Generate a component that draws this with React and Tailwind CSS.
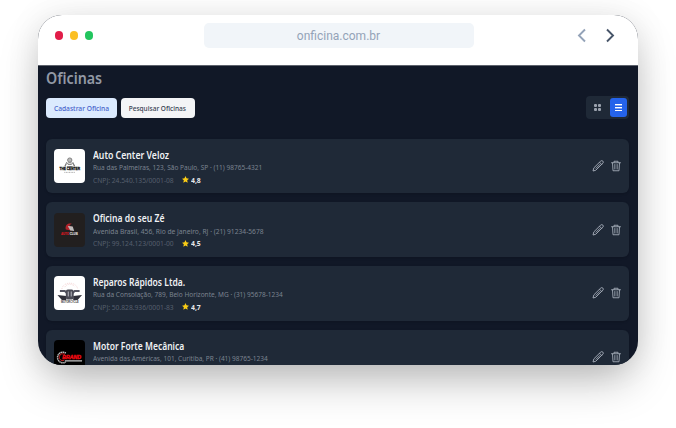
import React from 'react';

const shops = [
  { name: 'Auto Center Veloz', nameFit: 'scale-x-[0.872]', address: 'Rua das Palmeiras, 123, São Paulo, SP · (11) 98765-4321', addressFit: 'scale-x-[0.842]', cnpj: '24.540.135/0001-08', rating: '4,8', Logo: CenterLogo },
  { name: 'Oficina do seu Zé', nameFit: 'scale-x-[0.855]', address: 'Avenida Brasil, 456, Rio de Janeiro, RJ · (21) 91234-5678', addressFit: 'scale-x-[0.862]', cnpj: '99.124.123/0001-00', rating: '4,5', Logo: AutoClubLogo },
  { name: 'Reparos Rápidos Ltda.', nameFit: 'scale-x-[0.853]', address: 'Rua da Consolação, 789, Belo Horizonte, MG · (31) 95678-1234', addressFit: 'scale-x-[0.842]', cnpj: '50.828.936/0001-83', rating: '4,7', Logo: EngineLogo },
  { name: 'Motor Forte Mecânica', nameFit: 'scale-x-[0.852]', address: 'Avenida das Américas, 101, Curitiba, PR · (41) 98765-1234', addressFit: 'scale-x-[0.842]', Logo: BrandLogo },
];

function CenterLogo() {
  return (
    <svg viewBox="0 0 32 34" className="size-full bg-white">
      <g fill="none" stroke="#777" strokeWidth=".9">
        <circle cx="16" cy="11" r="2.2" fill="#bbb" />
        <path d="M11.500 17.500c0-5 9-5 9 0M13 13l-2 4M19 13l2 4M14 15.500h4M13 17.500h6" />
      </g>
      <text x="16" y="21.500" textAnchor="middle" fontSize="4.200" fontWeight="900" fill="#111" stroke="#111" strokeWidth=".3" textLength="21" lengthAdjust="spacingAndGlyphs">THE CENTER</text>
      <path d="M10.500 23.500h11" stroke="#aaa" strokeWidth="1" strokeDasharray="1 .6" />
    </svg>
  );
}

function AutoClubLogo() {
  return (
    <svg viewBox="0 0 32 34" className="size-full bg-[#221f1f]">
      <path d="M12 16.500c-1-4 1.500-7 6-6l-2.500 2 4 2-2 3z" fill="#b4232b" />
      <path d="m14 13 5 .5 1.500 4.500-4-.5z" fill="#bbb" />
      <text x="7" y="22.300" fontSize="4.300" fontWeight="900" fill="#d01820" stroke="#d01820" strokeWidth=".2" textLength="8.200" lengthAdjust="spacingAndGlyphs">AUTO</text>
      <text x="16" y="22.300" fontSize="4.300" fontWeight="900" fill="#d4d4d4" stroke="#d4d4d4" strokeWidth=".2" textLength="8.200" lengthAdjust="spacingAndGlyphs">CLUB</text>
    </svg>
  );
}

function EngineLogo() {
  return (
    <svg viewBox="0 0 32 34" className="size-full bg-white">
      <path d="M8 13c1-8 15-8 16 0M11 11c2-4 8-4 10 0" fill="none" stroke="#f2cccc" strokeWidth=".8" strokeDasharray="1 1" />
      <path d="M3.500 19l9 1v4H8zM28.500 19l-9 1v4H24z" fill="#30303a" />
      <path d="M6 15h5l2 2h6l2-2h5" fill="none" stroke="#555562" strokeWidth="1.900" />
      <rect x="12" y="13.500" width="8" height="10" rx="2" fill="#4a4a55" />
      <path d="M14.500 15.500v5M17.500 15.500v5" stroke="#c9c9d0" strokeWidth=".9" />
      <text x="16" y="27.300" textAnchor="middle" fontSize="3.500" fontWeight="900" fill="#333" textLength="18" lengthAdjust="spacingAndGlyphs">MOTORCYCLE</text>
    </svg>
  );
}

function BrandLogo() {
  return (
    <svg viewBox="0 0 32 34" className="size-full bg-black">
      <path d="M12 13a5.400 5.400 0 1 0 0 9" fill="none" stroke="#bbb" strokeWidth="1.500" strokeDasharray="1.500 .5" />
      <path d="M11 14.500a3.500 3.500 0 1 0-1 6" fill="none" stroke="#c22" strokeWidth="1" />
      <text x="8.500" y="19.400" fontSize="5.200" fontWeight="900" fontStyle="italic" fill="#ee0a12" stroke="#ee0a12" strokeWidth=".4" textLength="19" lengthAdjust="spacingAndGlyphs">BRAND</text>
      <path d="M11 21h17.500" stroke="#c5c5c5" strokeWidth="1.200" />
    </svg>
  );
}

function Pencil() {
  return (
    <svg viewBox="0 0 24 24" className="size-[12px]" fill="none" stroke="#a3abb7" strokeWidth="1.900" strokeLinecap="round" strokeLinejoin="round">
      <path d="M15 4.500l2.500-2.300a2.700 2.700 0 0 1 4.200 4.200L7.500 20.500 2 22l1.500-5.500zM15 4.500L19.500 9M8 16.500l7.500-7.500" />
    </svg>
  );
}

function Trash() {
  return (
    <svg viewBox="0 0 24 24" className="size-[12px]" fill="none" stroke="#a3abb7" strokeWidth="1.800" strokeLinecap="round" strokeLinejoin="round">
      <path d="M3 5.500h18M8 5V2.500h8V5M5 6l1 15.500h12L19 6M9.700 9v9M14.300 9v9" />
    </svg>
  );
}

function Card({ shop }) {
  const { Logo } = shop;
  return (
    <div className="flex h-[54.700px] shrink-0 items-center rounded-[6px] bg-[#1f2937] pl-[7.500px] pr-[7.500px] shadow-sm">
      <div className="h-[34px] w-[31.500px] shrink-0 overflow-hidden rounded-[4px] font-['Liberation_Sans',sans-serif]"><Logo /></div>
      <div className="ml-[7.700px] flex-1 whitespace-nowrap pt-[2px]">
        <div className={`h-[12.500px] w-max origin-left text-[10px] font-semibold leading-[13px] text-[#eff1f4] ${shop.nameFit}`}>{shop.name}</div>
        <div className={`h-[12.500px] w-max origin-left text-[7.750px] leading-[12px] text-[#7b838f] ${shop.addressFit}`}>{shop.address}</div>
        <div className="flex h-[12px] items-center text-[7.600px] leading-[12px] text-[#565f6d]">
          {shop.cnpj && (
            <>
              <span className="w-[89.500px]"><span className="block w-max origin-left scale-x-[0.883]">CNPJ: {shop.cnpj}</span></span>
              <svg viewBox="0 0 20 20" className="size-[7px]" fill="#facc15"><path d="M10 0l3 6.700 7 .8-5.200 4.900 1.400 7.200L10 16l-6.200 3.600 1.400-7.200L0 7.500l7-.8z" /></svg>
              <span className="ml-[2px] origin-left scale-x-[0.9] font-bold text-[#e5e7eb]">{shop.rating}</span>
            </>
          )}
        </div>
      </div>
      <div className="flex items-center gap-[6px]"><Pencil /><Trash /></div>
    </div>
  );
}

export default function App() {
  return (
    <div className="h-[428px] w-[676px] overflow-hidden bg-white pl-[38px] pt-[15px] font-['Noto_Sans',sans-serif]">
      <div className="flex h-[350px] w-[600px] flex-col overflow-hidden rounded-[24px] bg-[#111827] shadow-[0_0_34px_rgba(0,0,0,0.08),0_20px_44px_-6px_rgba(0,0,0,0.27)]">
        <header className="flex h-[51px] shrink-0 items-start border-b border-[#5d626c] bg-white pt-[8px]">
          <div className="flex w-[165.500px] gap-[6.500px] pl-[16.700px] pt-[8.300px]">
            <span className="size-[8.500px] rounded-full bg-[#e11d48]" />
            <span className="size-[8.500px] rounded-full bg-[#fbbf24]" />
            <span className="size-[8.500px] rounded-full bg-[#22c55e]" />
          </div>
          <div className="flex h-[25px] w-[270px] items-center justify-center rounded-[5px] bg-[#f1f5f9] pt-[1px] font-[Roboto,sans-serif] text-[12px] text-[#94a3b8]">onficina.com.br</div>
          <svg className="ml-[101px] mt-[4px] h-[17px] w-[44px]" fill="none" strokeWidth="1.900">
            <path d="M10 2.500L4 8.500l6 6" stroke="#94a3b8" />
            <path d="M32 2.500l6 6-6 6" stroke="#475569" />
          </svg>
        </header>
        <main className="flex min-h-0 flex-1 flex-col pl-[8px] pr-[9px]">
          <h1 className="mt-[1px] h-[22px] w-max origin-left scale-x-[0.89] text-[16px] font-semibold leading-[22px] text-[#9299a5]">Oficinas</h1>
          <div className="mt-[7px] flex h-[23px] shrink-0 items-center justify-between">
            <div className="flex gap-[3.500px] whitespace-nowrap pt-[1px] text-[7.600px] font-medium">
              <button className="flex h-[20.500px] w-[71px] items-center justify-center rounded-[4px] bg-[#dbeafe] pt-px text-[#4663cb]"><span className="scale-x-[0.875]">Cadastrar Oficina</span></button>
              <button className="flex h-[20.500px] w-[74.500px] items-center justify-center rounded-[4px] bg-[#f3f4f6] pt-px text-[#374151]"><span className="scale-x-[0.86]">Pesquisar Oficinas</span></button>
            </div>
            <div className="mr-[0.500px] flex h-[23px] w-[42.500px] items-center rounded-[4px] bg-[#1f2937] pl-px">
              <div className="grid w-[22.500px] -translate-x-px grid-cols-[3px_3px] justify-center gap-[1.500px]">
                {[0, 1, 2, 3].map((i) => <span key={i} className="size-[3px] rounded-[1px] bg-[#9ca3af]" />)}
              </div>
              <div className="flex h-[19.500px] w-[17.500px] items-center justify-center rounded-[3px] bg-[#2563eb]">
                <svg viewBox="0 0 7 7" className="size-[7px]" fill="white">
                  <path d="M0 0h7v1H0zM0 3h7v1H0zM0 6h7v1H0z" />
                  <path d="M0 1h7v1H0zM0 4h7v1H0z" opacity=".4" />
                </svg>
              </div>
            </div>
          </div>
          <div className="mt-[19.700px] flex flex-col gap-[9px]">
            {shops.map((shop) => <Card key={shop.name} shop={shop} />)}
          </div>
        </main>
      </div>
    </div>
  );
}
